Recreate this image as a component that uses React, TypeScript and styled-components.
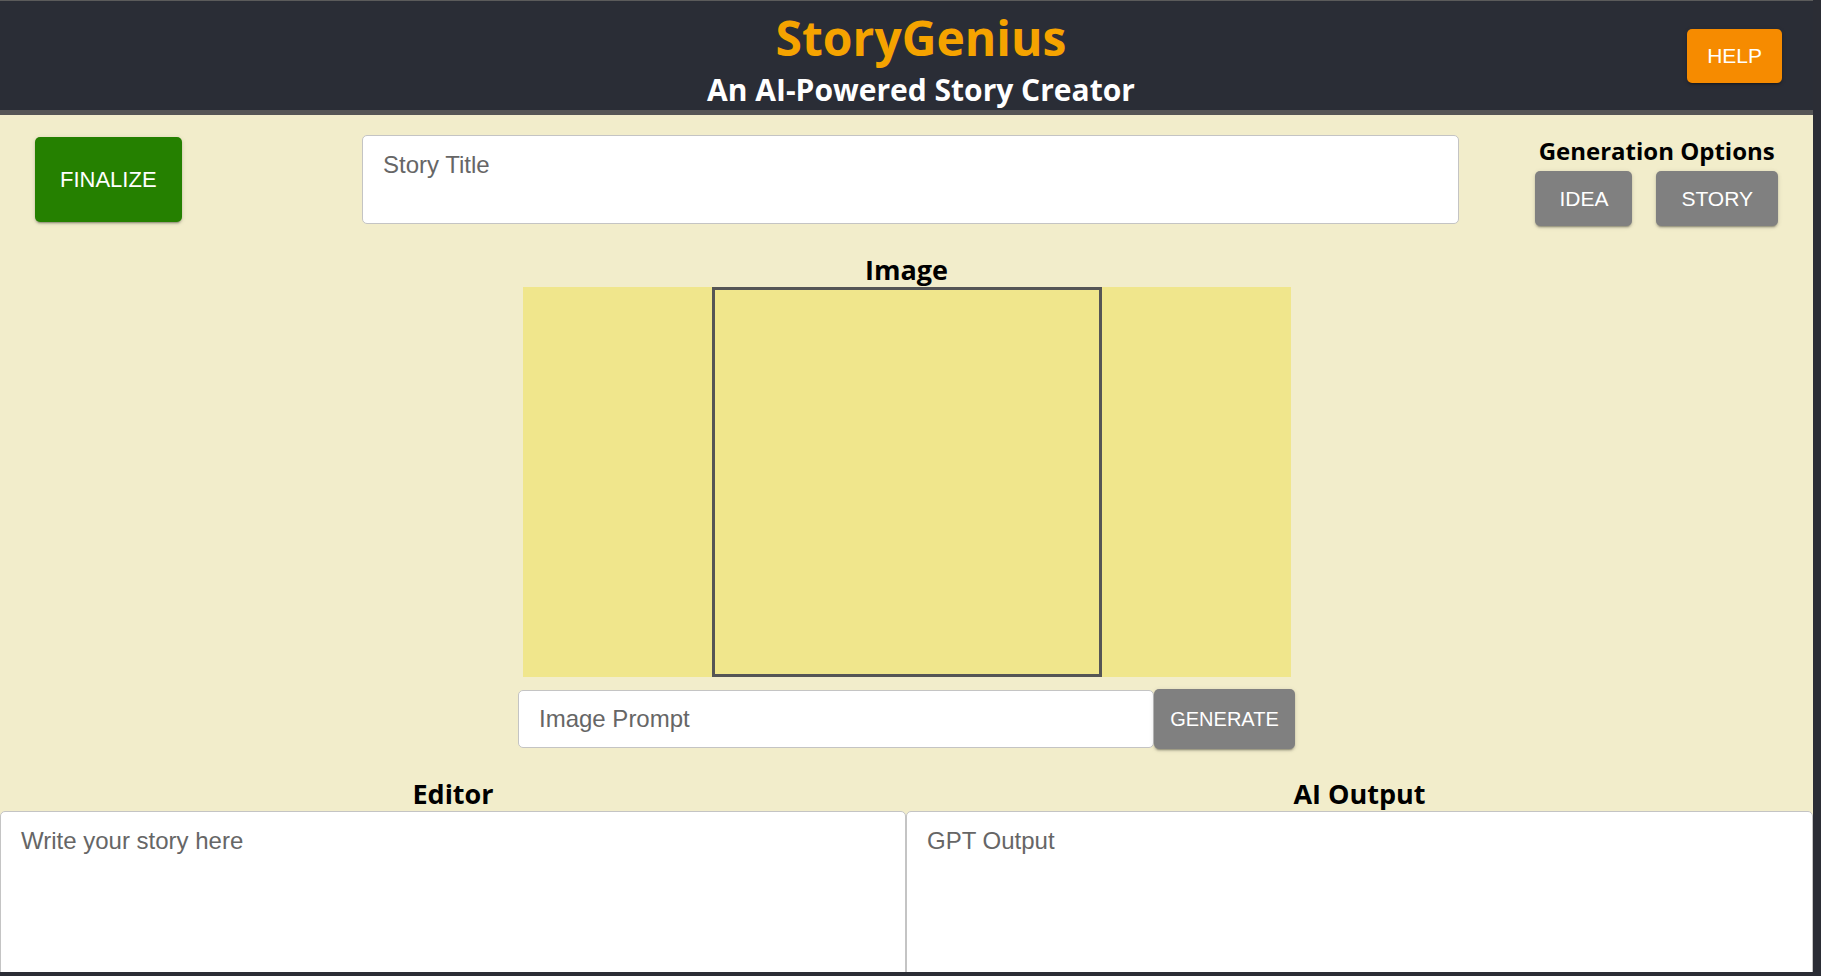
import React from "react";
import styled, { createGlobalStyle } from "styled-components";

const GlobalStyle = createGlobalStyle`
    html, body {
        margin: 0;
        padding: 0;
        height: 100%;
        background: #2b2d35;
        overflow: hidden;
    }
    #root {
        height: 100%;
    }
    * {
        box-sizing: border-box;
    }
`;

const App = () => {
    return (
        <>
            <GlobalStyle />
            <Page>
                <Header>
                    <TitleBlock>
                        <Title>StoryGenius</Title>
                        <Subtitle>An AI-Powered Story Creator</Subtitle>
                    </TitleBlock>
                    <HelpButton>HELP</HelpButton>
                </Header>
                <Main>
                    <TopRow>
                        <ActionButton $color="#258000" $height={85} $pad={25} $size={22}>
                            FINALIZE
                        </ActionButton>
                        <TitleInput placeholder="Story Title" />
                        <Options>
                            <OptionsLabel>Generation Options</OptionsLabel>
                            <OptionButtons>
                                <ActionButton $color="#808080" $height={55} $pad={24}>
                                    IDEA
                                </ActionButton>
                                <ActionButton $color="#808080" $height={55} $pad={25}>
                                    STORY
                                </ActionButton>
                            </OptionButtons>
                        </Options>
                    </TopRow>

                    <ImageSection>
                        <SectionLabel>Image</SectionLabel>
                        <ImageArea>
                            <ImageFrame />
                        </ImageArea>
                        <PromptRow>
                            <PromptInput placeholder="Image Prompt" />
                            <GenerateButton>GENERATE</GenerateButton>
                        </PromptRow>
                    </ImageSection>

                    <Panels>
                        <Panel>
                            <SectionLabel>Editor</SectionLabel>
                            <PanelText placeholder="Write your story here" />
                        </Panel>
                        <Panel>
                            <SectionLabel>AI Output</SectionLabel>
                            <PanelText placeholder="GPT Output" readOnly />
                        </Panel>
                    </Panels>
                </Main>
            </Page>
        </>
    );
};

export default App;

const Page = styled.div`
    width: 1813px;
    height: 972px;
    display: flex;
    flex-direction: column;
    border-top: 1px solid #5b5b5b;
    background: #f2edcb;
    overflow: hidden;
`;

const Header = styled.header`
    height: 114px;
    flex-shrink: 0;
    background: #2a2d36;
    border-bottom: 5px solid #555555;
    display: grid;
    grid-template-columns: 1fr auto 1fr;
    padding: 0 31px 0 60px;
`;

const TitleBlock = styled.div`
    grid-column: 2;
    display: flex;
    flex-direction: column;
    align-items: center;
    padding-top: 11px;
    gap: 9px;
    font-family: "Open Sans", "Noto Sans", sans-serif;
    font-weight: 700;
`;

const Title = styled.h1`
    margin: 0;
    font-size: 48px;
    line-height: 52px;
    color: #f5a300;
`;

const Subtitle = styled.h2`
    margin: 0;
    font-size: 30px;
    line-height: 34px;
    color: #ffffff;
`;

const buttonShadow = `0 3px 1px -2px rgba(0,0,0,0.2), 0 2px 2px 0 rgba(0,0,0,0.14), 0 1px 5px 0 rgba(0,0,0,0.12)`;

const HelpButton = styled.button`
    grid-column: 3;
    justify-self: end;
    align-self: start;
    margin-top: 28px;
    height: 54px;
    padding: 0 20px;
    border: none;
    border-radius: 5px;
    background: #f68b00;
    color: #fff;
    font-family: "Liberation Sans", Arial, sans-serif;
    font-size: 21px;
    box-shadow: ${buttonShadow};
`;

const ActionButton = styled.button<{ $color: string; $height: number; $pad: number; $size?: number }>`
    height: ${(p) => p.$height}px;
    padding: 0 ${(p) => p.$pad}px;
    border: none;
    border-radius: 5px;
    background: ${(p) => p.$color};
    color: #fff;
    font-family: "Liberation Sans", Arial, sans-serif;
    font-size: ${(p) => p.$size ?? 21}px;
    box-shadow: ${buttonShadow};
`;

const Main = styled.main`
    flex: 1;
    min-height: 0;
    display: flex;
    flex-direction: column;
`;

const TopRow = styled.div`
    display: grid;
    grid-template-columns: 327px 1097px 1fr;
    grid-template-rows: 89px;
    align-items: center;
    padding: 20px 35px 0 35px;
    justify-items: start;
`;

const inputBase = `
    background: #fff;
    border: 1px solid #c4c4c4;
    border-radius: 5px;
    font-family: "Liberation Sans", Arial, sans-serif;
    font-size: 24px;
    color: #333;
    outline: none;
    resize: none;
    &::placeholder {
        color: #666;
    }
`;

const TitleInput = styled.textarea`
    ${inputBase}
    width: 1097px;
    height: 89px;
    padding: 15px 20px;
`;

const Options = styled.div`
    justify-self: end;
    align-self: start;
    margin-top: 2px;
    display: flex;
    flex-direction: column;
    align-items: center;
    gap: 6px;
`;

const OptionsLabel = styled.div`
    font-family: "Open Sans", "Noto Sans", sans-serif;
    font-weight: 700;
    font-size: 24px;
    line-height: 28px;
    color: #000;
`;

const OptionButtons = styled.div`
    display: flex;
    gap: 24px;
`;

const ImageSection = styled.section`
    display: flex;
    flex-direction: column;
    align-items: center;
    margin-top: 31px;
`;

const SectionLabel = styled.div`
    font-family: "Open Sans", "Noto Sans", sans-serif;
    font-weight: 700;
    font-size: 27px;
    line-height: 30px;
    color: #000;
    text-align: center;
    margin-bottom: 2px;
`;

const ImageArea = styled.div`
    width: 768px;
    height: 390px;
    background: #f0e68c;
    display: flex;
    justify-content: center;
`;

const ImageFrame = styled.div`
    width: 390px;
    height: 100%;
    border: 3px solid #555555;
`;

const PromptRow = styled.div`
    display: flex;
    align-items: center;
    margin-top: 12px;
`;

const PromptInput = styled.input`
    ${inputBase}
    width: 636px;
    height: 58px;
    padding: 0 20px;
`;

const GenerateButton = styled.button`
    width: 141px;
    height: 60px;
    border: none;
    border-radius: 5px;
    background: #808080;
    color: #fff;
    font-family: "Liberation Sans", Arial, sans-serif;
    font-size: 20px;
    box-shadow: ${buttonShadow};
`;

const Panels = styled.div`
    flex: 1;
    min-height: 0;
    display: grid;
    grid-template-columns: 906px 1fr;
    margin-top: 30px;
`;

const Panel = styled.div`
    display: flex;
    flex-direction: column;
    min-height: 0;
`;

const PanelText = styled.textarea`
    ${inputBase}
    flex: 1;
    width: 100%;
    min-height: 200px;
    padding: 15px 20px;
`;
